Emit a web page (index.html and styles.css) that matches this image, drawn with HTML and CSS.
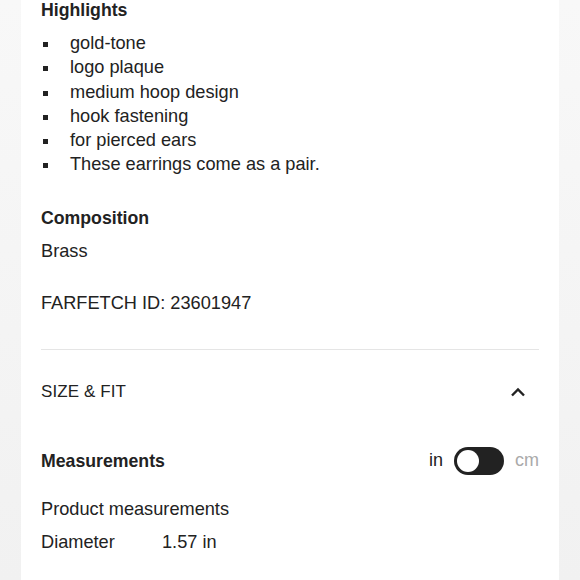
FILE: index.html
```html
<!DOCTYPE html>
<html>
<head>
<meta charset="utf-8">
<link rel="stylesheet" href="styles.css">
</head>
<body>
<div class="panel">
  <section class="block">
    <h3 class="heading">Highlights</h3>
    <ul class="list">
      <li>gold-tone</li>
      <li>logo plaque</li>
      <li>medium hoop design</li>
      <li>hook fastening</li>
      <li>for pierced ears</li>
      <li>These earrings come as a pair.</li>
    </ul>
  </section>
  <section class="block comp">
    <h3 class="heading">Composition</h3>
    <p class="text brass">Brass</p>
    <p class="text id">FARFETCH ID: 23601947</p>
  </section>
  <div class="divider"></div>
  <div class="acc-head">
    <span class="acc-title">SIZE &amp; FIT</span>
    <svg class="chev" width="16" height="10" viewBox="0 0 16 10"><path d="M2 8.5 L8 2.5 L14 8.5" fill="none" stroke="#222" stroke-width="2.4"/></svg>
  </div>
  <div class="meas-head">
    <span class="heading">Measurements</span>
    <div class="units">
      <span class="unit">in</span>
      <span class="toggle"><span class="knob"></span></span>
      <span class="unit off">cm</span>
    </div>
  </div>
  <p class="text pm">Product measurements</p>
  <div class="row"><span class="label">Diameter</span><span>1.57 in</span></div>
</div>
</body>
</html>
```
FILE: styles.css
```css
html, body {
  margin: 0;
  padding: 0;
}
body {
  background: linear-gradient(#f8f8f8, #f1f1f1);
  font-family: "Liberation Sans", Arial, sans-serif;
  color: #222;
  height: 580px;
  overflow: hidden;
}
.panel {
  background: #fff;
  margin: 0 21px;
  padding: 0 20px;
  height: 580px;
  box-sizing: border-box;
}
.heading {
  margin: 0;
  font-size: 17.7px;
  font-weight: 700;
  line-height: 20px;
  color: #222;
}
.list {
  margin: 11px 0 0;
  padding: 0;
  list-style: none;
}
.list li {
  font-size: 18.2px;
  line-height: 24.3px;
  padding-left: 29px;
  position: relative;
}
.list li::before {
  content: "";
  position: absolute;
  left: 2px;
  top: 11px;
  width: 5px;
  height: 5px;
  background: #222;
}
.comp {
  margin-top: 31px;
}
.text {
  margin: 0;
  font-size: 18.2px;
  line-height: 20px;
}
.brass {
  margin-top: 13px;
}
.id {
  margin-top: 32px;
}
.divider {
  height: 1px;
  background: #e5e5e5;
  margin-top: 36px;
}
.acc-head {
  display: flex;
  justify-content: space-between;
  align-items: center;
  height: 84px;
}
.acc-title {
  font-size: 17px;
  letter-spacing: 0.1px;
}
.chev {
  margin-right: 13px;
}
.meas-head {
  display: flex;
  justify-content: space-between;
  align-items: center;
  margin-top: 12px;
  height: 30px;
}
.units {
  display: flex;
  align-items: center;
  gap: 11px;
}
.unit {
  font-size: 18px;
}
.unit.off {
  color: #aaa;
}
.toggle {
  width: 50px;
  height: 28px;
  border-radius: 14px;
  background: #222;
  position: relative;
  display: block;
}
.knob {
  position: absolute;
  left: 3px;
  top: 3px;
  width: 22px;
  height: 22px;
  border-radius: 50%;
  background: #fff;
}
.pm {
  margin-top: 23px;
}
.row {
  display: flex;
  font-size: 18.2px;
  margin-top: 13px;
  line-height: 20px;
}
.label {
  width: 121px;
}
```
